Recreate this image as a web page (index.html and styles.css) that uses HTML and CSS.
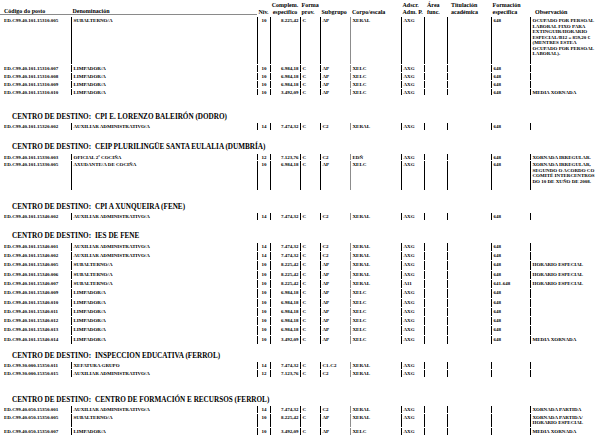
FILE: index.html
```html
<!DOCTYPE html>
<html lang="gl">
<head>
<meta charset="utf-8">
<title>Relación de postos</title>
<link rel="stylesheet" href="styles.css">
</head>
<body>
<div class="page">
  <div class="head cols">
    <div class="h-cod u"><span>Código do posto</span></div>
    <div class="h-den u"><span>Denominación</span></div>
    <div class="h-niv"><span>Nív.</span></div>
    <div class="h-cmp"><span>Complem.</span><span>específico</span></div>
    <div class="h-for"><span>Forma</span><span>prov.</span></div>
    <div class="h-sub"><span>Subgrupo</span></div>
    <div class="h-cor"><span>Corpo/escala</span></div>
    <div class="h-ads"><span>Adscr.</span><span>Adm. P.</span></div>
    <div class="h-are"><span>Área</span><span>func.</span></div>
    <div class="h-tit"><span>Titulación</span><span>académica</span></div>
    <div class="h-fes"><span>Formación</span><span>específica</span></div>
    <div class="h-obs"><span>Observación</span></div>
  </div>

  <div class="sec first">
    <div class="rows">
      <div class="row cols tall"><div class="c0">ED.C99.40.101.15310.005</div><div>SUBALTERNO/A</div><div class="niv">10</div><div class="cmp">8.225,42</div><div>C</div><div>AP</div><div class="corpo">XERAL</div><div>AXG</div><div></div><div></div><div>648</div><div>OCUPADO POR PERSOAL<br>LABORAL FIXO PARA<br>EXTINGUIR/HORARIO<br>ESPECIAL/B12 = 859,20 €<br>(MENTRES ESTEA<br>OCUPADO POR PERSOAL<br>LABORAL).<br>&nbsp;</div></div>
      <div class="row cols"><div class="c0">ED.C99.40.101.15310.007</div><div>LIMPADOR/A</div><div class="niv">10</div><div class="cmp">6.984,18</div><div>C</div><div>AP</div><div class="corpo">XELC</div><div>AXG</div><div></div><div></div><div>648</div><div></div></div>
      <div class="row cols"><div class="c0">ED.C99.40.101.15310.008</div><div>LIMPADOR/A</div><div class="niv">10</div><div class="cmp">6.984,18</div><div>C</div><div>AP</div><div class="corpo">XELC</div><div>AXG</div><div></div><div></div><div>648</div><div></div></div>
      <div class="row cols"><div class="c0">ED.C99.40.101.15310.009</div><div>LIMPADOR/A</div><div class="niv">10</div><div class="cmp">6.984,18</div><div>C</div><div>AP</div><div class="corpo">XELC</div><div>AXG</div><div></div><div></div><div>648</div><div></div></div>
      <div class="row cols"><div class="c0">ED.C99.40.101.15310.010</div><div>LIMPADOR/A</div><div class="niv">10</div><div class="cmp">3.492,09</div><div>C</div><div>AP</div><div class="corpo">XELC</div><div>AXG</div><div></div><div></div><div>648</div><div>MEDIA XORNADA</div></div>
    </div>
  </div>

  <div class="sec gap-dodro">
    <div class="sec-h"><span class="lbl">CENTRO DE DESTINO:</span>CPI E. LORENZO BALEIRÓN (DODRO)</div>
    <div class="rows">
      <div class="row cols"><div class="c0">ED.C99.40.101.15320.002</div><div>AUXILIAR ADMINISTRATIVO/A</div><div class="niv">14</div><div class="cmp">7.474,32</div><div>C</div><div>C2</div><div class="corpo">XERAL</div><div>AXG</div><div></div><div></div><div>648</div><div></div></div>
    </div>
  </div>

  <div class="sec gap-dumbria">
    <div class="sec-h"><span class="lbl">CENTRO DE DESTINO:</span>CEIP PLURILINGÜE SANTA EULALIA (DUMBRÍA)</div>
    <div class="rows">
      <div class="row cols"><div class="c0">ED.C99.40.101.15330.003</div><div>OFICIAL 2ª COCIÑA</div><div class="niv">12</div><div class="cmp">7.123,76</div><div>C</div><div>C2</div><div class="corpo">EDÑ</div><div>AXG</div><div></div><div></div><div>648</div><div>XORNADA IRREGULAR.</div></div>
      <div class="row cols"><div class="c0">ED.C99.40.101.15330.005</div><div>AXUDANTE/A DE COCIÑA</div><div class="niv">10</div><div class="cmp">6.984,18</div><div>C</div><div>AP</div><div class="corpo">XELC</div><div>AXG</div><div></div><div></div><div>648</div><div>XORNADA IRREGULAR,<br>SEGUNDO O ACORDO CO<br>COMITÉ INTERCENTROS<br>DO 10 DE XUÑO DE 2008.<br>&nbsp;</div></div>
    </div>
  </div>

  <div class="sec gap-xunqueira">
    <div class="sec-h"><span class="lbl">CENTRO DE DESTINO:</span>CPI A XUNQUEIRA (FENE)</div>
    <div class="rows">
      <div class="row cols"><div class="c0">ED.C99.40.101.15340.002</div><div>AUXILIAR ADMINISTRATIVO/A</div><div class="niv">14</div><div class="cmp">7.474,32</div><div>C</div><div>C2</div><div class="corpo">XERAL</div><div>AXG</div><div></div><div></div><div>648</div><div></div></div>
    </div>
  </div>

  <div class="sec gap-ies loose">
    <div class="sec-h"><span class="lbl">CENTRO DE DESTINO:</span>IES DE FENE</div>
    <div class="rows">
      <div class="row cols"><div class="c0">ED.C99.40.101.15340.001</div><div>AUXILIAR ADMINISTRATIVO/A</div><div class="niv">14</div><div class="cmp">7.474,32</div><div>C</div><div>C2</div><div class="corpo">XERAL</div><div>AXG</div><div></div><div></div><div>648</div><div></div></div>
      <div class="row cols"><div class="c0">ED.C99.40.101.15340.002</div><div>AUXILIAR ADMINISTRATIVO/A</div><div class="niv">14</div><div class="cmp">7.474,32</div><div>C</div><div>C2</div><div class="corpo">XERAL</div><div>AXG</div><div></div><div></div><div>648</div><div></div></div>
      <div class="row cols"><div class="c0">ED.C99.40.101.15340.005</div><div>SUBALTERNO/A</div><div class="niv">10</div><div class="cmp">8.225,42</div><div>C</div><div>AP</div><div class="corpo">XERAL</div><div>AXG</div><div></div><div></div><div>648</div><div>HORARIO ESPECIAL</div></div>
      <div class="row cols"><div class="c0">ED.C99.40.101.15340.006</div><div>SUBALTERNO/A</div><div class="niv">10</div><div class="cmp">8.225,42</div><div>C</div><div>AP</div><div class="corpo">XERAL</div><div>AXG</div><div></div><div></div><div>648</div><div>HORARIO ESPECIAL</div></div>
      <div class="row cols"><div class="c0">ED.C99.40.101.15340.007</div><div>SUBALTERNO/A</div><div class="niv">10</div><div class="cmp">8.225,42</div><div>C</div><div>AP</div><div class="corpo">XERAL</div><div>A11</div><div></div><div></div><div>641-648</div><div>HORARIO ESPECIAL</div></div>
      <div class="row cols"><div class="c0">ED.C99.40.101.15340.009</div><div>LIMPADOR/A</div><div class="niv">10</div><div class="cmp">6.984,18</div><div>C</div><div>AP</div><div class="corpo">XELC</div><div>AXG</div><div></div><div></div><div>648</div><div></div></div>
      <div class="row cols"><div class="c0">ED.C99.40.101.15340.010</div><div>LIMPADOR/A</div><div class="niv">10</div><div class="cmp">6.984,18</div><div>C</div><div>AP</div><div class="corpo">XELC</div><div>AXG</div><div></div><div></div><div>648</div><div></div></div>
      <div class="row cols"><div class="c0">ED.C99.40.101.15340.011</div><div>LIMPADOR/A</div><div class="niv">10</div><div class="cmp">6.984,18</div><div>C</div><div>AP</div><div class="corpo">XELC</div><div>AXG</div><div></div><div></div><div>648</div><div></div></div>
      <div class="row cols"><div class="c0">ED.C99.40.101.15340.012</div><div>LIMPADOR/A</div><div class="niv">10</div><div class="cmp">6.984,18</div><div>C</div><div>AP</div><div class="corpo">XELC</div><div>AXG</div><div></div><div></div><div>648</div><div></div></div>
      <div class="row cols"><div class="c0">ED.C99.40.101.15340.013</div><div>LIMPADOR/A</div><div class="niv">10</div><div class="cmp">6.984,18</div><div>C</div><div>AP</div><div class="corpo">XELC</div><div>AXG</div><div></div><div></div><div>648</div><div></div></div>
      <div class="row cols"><div class="c0">ED.C99.40.101.15340.014</div><div>LIMPADOR/A</div><div class="niv">10</div><div class="cmp">3.492,09</div><div>C</div><div>AP</div><div class="corpo">XELC</div><div>AXG</div><div></div><div></div><div>648</div><div>MEDIA XORNADA</div></div>
    </div>
  </div>

  <div class="sec gap-inspeccion">
    <div class="sec-h"><span class="lbl">CENTRO DE DESTINO:</span>INSPECCION EDUCATIVA (FERROL)</div>
    <div class="rows">
      <div class="row cols"><div class="c0">ED.C99.30.000.15350.011</div><div>XEFATURA GRUPO</div><div class="niv">14</div><div class="cmp">7.474,32</div><div>C</div><div>C1-C2</div><div class="corpo">XERAL</div><div>AXG</div><div></div><div></div><div></div><div></div></div>
      <div class="row cols"><div class="c0">ED.C99.30.000.15350.015</div><div>AUXILIAR ADMINISTRATIVO/A</div><div class="niv">12</div><div class="cmp">7.123,76</div><div>C</div><div>C2</div><div class="corpo">XERAL</div><div>AXG</div><div></div><div></div><div></div><div></div></div>
    </div>
  </div>

  <div class="sec gap-formacion">
    <div class="sec-h"><span class="lbl">CENTRO DE DESTINO:</span>CENTRO DE FORMACIÓN E RECURSOS (FERROL)</div>
    <div class="rows">
      <div class="row cols"><div class="c0">ED.C99.40.050.15350.001</div><div>AUXILIAR ADMINISTRATIVO/A</div><div class="niv">14</div><div class="cmp">7.474,32</div><div>C</div><div>C2</div><div class="corpo">XERAL</div><div>AXG</div><div></div><div></div><div></div><div>XORNADA PARTIDA</div></div>
      <div class="row cols two"><div class="c0">ED.C99.40.050.15350.005</div><div>SUBALTERNO/A</div><div class="niv">10</div><div class="cmp">8.225,42</div><div>C</div><div>AP</div><div class="corpo">XERAL</div><div>AXG</div><div></div><div></div><div></div><div>XORNADA PARTIDA/<br>HORARIO ESPECIAL</div></div>
      <div class="row cols"><div class="c0">ED.C99.40.050.15350.007</div><div>LIMPADOR/A</div><div class="niv">10</div><div class="cmp">3.492,09</div><div>C</div><div>AP</div><div class="corpo">XELC</div><div>AXG</div><div></div><div></div><div></div><div>MEDIA XORNADA</div></div>
    </div>
  </div>
</div>
</body>
</html>
```
FILE: styles.css
```css
* {
  box-sizing: border-box;
  margin: 0;
  padding: 0;
}

html,
body {
  background: #ffffff;
}

body {
  width: 616px;
  height: 439px;
  overflow: hidden;
  font-family: "Liberation Serif", "Times New Roman", serif;
  font-weight: bold;
  color: #000000;
}

.page {
  width: 616px;
}

.cols {
  display: grid;
  grid-template-columns: 71px 186px 13px 30px 20px 30px 51px 23px 23px 44px 39px 1fr;
}

/* column headers */
.head {
  height: 15px;
  padding-top: 1px;
  font-size: 6px;
  line-height: 6.5px;
}

.head > div {
  display: flex;
  flex-direction: column;
  justify-content: flex-end;
  white-space: nowrap;
}

.head > .u {
  border-bottom: 1px solid #8a8a8a;
}

.h-cod { padding-left: 4px; }
.h-den { padding-left: 1.5px; }
.h-niv { align-items: center; }
.h-cmp { align-items: center; }
.h-for { padding-left: 1.5px; }
.h-sub { padding-left: 1.5px; }
.h-cor { padding-left: 2px; }
.h-ads { padding-left: 1.5px; }
.h-are { padding-left: 3px; }
.h-tit { padding-left: 4px; }
.h-fes { padding-left: 1.5px; }
.h-obs { padding-left: 5px; }

/* sections */
.sec.first {
  margin-top: 2.3px;
}

.gap-dodro { margin-top: 17.5px; }
.gap-dumbria { margin-top: 13.3px; }
.gap-xunqueira { margin-top: 13.1px; }
.gap-ies { margin-top: 12.3px; }
.gap-inspeccion { margin-top: 7.6px; }
.gap-formacion { margin-top: 19.3px; }

.sec-h {
  font-size: 7.2px;
  line-height: 8px;
  padding-left: 12px;
  margin-bottom: 2.3px;
  white-space: nowrap;
}

.sec-h .lbl {
  display: inline-block;
  width: 83px;
}

/* table rows */
.rows {
  display: flex;
  flex-direction: column;
  gap: 1px;
}

.row {
  min-height: 6.8px;
  font-size: 5px;
  line-height: 5.5px;
}

.row.tall > div {
  padding-bottom: 2px;
}

.row.two > div {
  padding-bottom: 1px;
}

.loose .row {
  min-height: 8.3px;
}

.row > div {
  padding: 1px 0 0 1.5px;
  border-left: 1px solid #000000;
  white-space: nowrap;
}

.row > .c0 {
  border-left: 0;
  padding-left: 4px;
}

.row > .niv {
  text-align: center;
  padding-left: 0;
}

.row > .cmp {
  text-align: right;
  padding-right: 1.5px;
}

.row > .corpo {
  border-left: 1.5px solid #8c8c8c;
}
```
